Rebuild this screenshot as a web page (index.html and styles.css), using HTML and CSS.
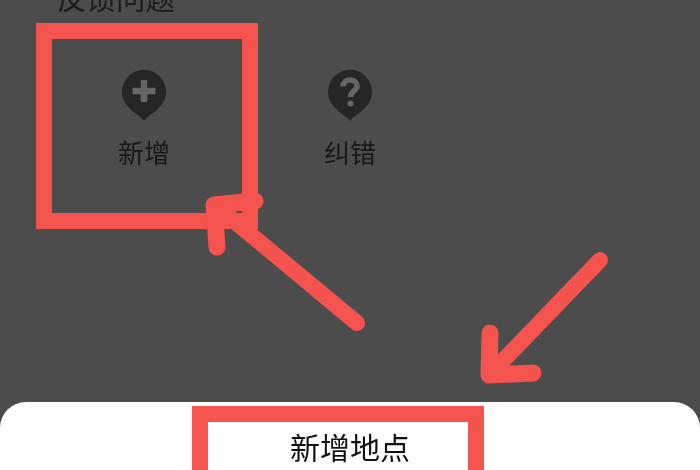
FILE: index.html
```html
<!DOCTYPE html>
<html lang="zh-CN">
<head>
<meta charset="utf-8">
<title>新增地点</title>
<link rel="stylesheet" href="styles.css">
</head>
<body>
<main class="screen">
  <section class="panel">
    <h2 class="panel-title">反馈问题</h2>
    <div class="actions">
      <div class="action">
        <svg class="pin" viewBox="0 0 46 54" aria-hidden="true">
          <path class="pin-body" d="M23 52C21 48 7 41 3 32A22 22 0 1 1 43 32C39 41 25 48 23 52Z"/>
          <path class="pin-mark" d="M23 11V33M11.500 22H34.500"/>
        </svg>
        <span class="action-label">新增</span>
      </div>
      <div class="action">
        <svg class="pin" viewBox="0 0 46 54" aria-hidden="true">
          <path class="pin-body" d="M23 52C21 48 7 41 3 32A22 22 0 1 1 43 32C39 41 25 48 23 52Z"/>
          <path class="pin-mark pin-q" d="M16 17.500C16 13.500 19 11 23 11C27 11 30 13.500 30 17C30 22 23.500 22 23.500 28"/>
          <circle class="pin-dot" cx="23.500" cy="34.500" r="3"/>
        </svg>
        <span class="action-label">纠错</span>
      </div>
    </div>
  </section>
  <section class="sheet">
    <div class="sheet-title">新增地点</div>
  </section>
  <div class="mark mark-add"></div>
  <div class="mark mark-sheet"></div>
  <svg class="arrows" viewBox="0 0 700 470" aria-hidden="true">
    <path class="arrow" d="M357 323L221 210"/>
    <path class="arrow-head" d="M217 247L214 205L255 201"/>
    <path class="arrow" d="M600 260L494 370"/>
    <path class="arrow-head" d="M490 333L489 375L533 373"/>
  </svg>
</main>
</body>
</html>
```

FILE: styles.css
```css
* { box-sizing: border-box; }
html, body { margin: 0; padding: 0; }
body { width: 700px; height: 470px; overflow: hidden; font-family: "Noto Sans CJK SC", "Noto Sans", sans-serif; }
.screen { position: relative; width: 700px; height: 470px; overflow: hidden; background: #4c4c4c; display: flex; flex-direction: column; }
.panel { flex: 1; min-height: 0; padding-left: 41px; }
.panel-title { margin: -25px 0 0 16px; font-size: 29.500px; line-height: 42px; font-weight: 400; color: #1c1c1c; filter: blur(0.4px); }
.actions { display: grid; grid-template-columns: 206px 206px; margin-top: 52px; }
.action { display: flex; flex-direction: column; align-items: center; }
.pin { width: 46px; height: 54px; display: block; }
.pin-body { fill: #262626; }
.pin-mark { fill: none; stroke: #666; stroke-width: 6.500; }
.pin-q { stroke-width: 5.500; }
.pin-dot { fill: #666; }
.action-label { margin-top: 11px; font-size: 26px; line-height: 36px; color: #181818; filter: blur(0.3px); }
.sheet { flex: none; height: 68px; background: #fff; border-radius: 26px 26px 0 0; display: flex; justify-content: center; padding: 23px 0 0 0; }
.sheet-title { font-size: 30px; line-height: 42px; color: #111; filter: blur(0.3px); }
.mark { position: absolute; border: 16px solid #f5544e; }
.mark-add { left: 36px; top: 23px; width: 222px; height: 206px; }
.mark-sheet { left: 192px; top: 406px; width: 292px; height: 90px; }
.arrows { position: absolute; left: 0; top: 0; width: 700px; height: 470px; }
.arrow, .arrow-head { fill: none; stroke: #f5544e; stroke-linecap: round; stroke-linejoin: round; }
.arrow { stroke-width: 16; }
.arrow-head { stroke-width: 17; }
```
